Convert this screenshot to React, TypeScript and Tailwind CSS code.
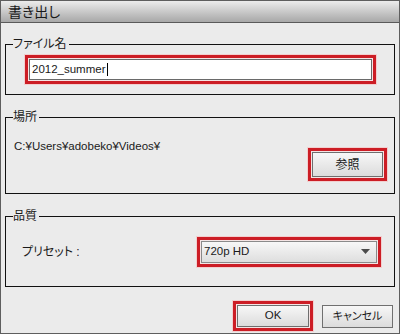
import React from "react";

const jp = "font-['Liberation_Sans','Noto_Sans_CJK_JP',sans-serif] [font-feature-settings:'palt']";

function RedBox({ children, className = "" }: { children: React.ReactNode; className?: string }) {
  return (
    <div className={`border-[3px] border-[#cc1d25] p-[1px] bg-[#f4e4e4] shadow-[0_0_0_1px_#f2cfcf] ${className}`}>
      {children}
    </div>
  );
}

function Group({ label, className, children }: { label: string; className: string; children?: React.ReactNode }) {
  return (
    <div className={`relative border border-[#111] ${className}`}>
      <span className="absolute left-[7px] top-[-8px] bg-[#ebebeb] pr-[2px] text-[12px] leading-[14px] text-[#1a1a1a]">
        {label}
      </span>
      {children}
    </div>
  );
}

export default function App() {
  return (
    <div className={`w-[400px] h-[334px] bg-[#ebebeb] border border-[#5e5e5e] flex flex-col text-[#1a1a1a] ${jp}`}>
      <div className="h-[22px] shrink-0 border-b border-[#5a5a5a] bg-gradient-to-b from-[#ececec] to-[#a8a8a8] pl-[7px] flex items-center text-[14px] leading-none">
        書き出し
      </div>
      <div className="flex-1 flex flex-col px-[4px]">
        <Group label="ファイル名" className="mt-[21px] h-[51px] pt-[10px] pl-[19px] pr-[18px]">
          <RedBox>
            <div className="h-[21px] border border-[#6a6a6a] bg-white pl-[2px] flex items-center text-[11.5px] leading-none">
              <span>2012_summer</span>
              <span className="ml-[1px] inline-block w-[1px] h-[13px] bg-black" />
            </div>
          </RedBox>
        </Group>

        <Group label="場所" className="mt-[22px] h-[77px] pl-[8px] pr-[7px] flex justify-between">
          <div className="self-start mt-[21px] text-[11.5px] leading-[14px]">C:¥Users¥adobeko¥Videos¥</div>
          <RedBox className="self-end mb-[12px]">
            <div className="w-[71px] h-[25px] border border-[#6e6e6e] bg-gradient-to-b from-[#f7f7f7] to-[#dcdcdc] flex items-center justify-center text-[12px] leading-none">
              参照
            </div>
          </RedBox>
        </Group>

        <Group label="品質" className="mt-[22px] h-[71px] pl-[16px] pr-[13px] flex items-center justify-between">
          <div className="text-[12px] leading-none mt-[1px]">プリセット :</div>
          <RedBox>
            <div className="w-[176px] h-[22px] border border-[#8a8a8a] bg-gradient-to-b from-[#f7f7f7] to-[#dedede] flex items-center justify-between pl-[2px] pr-[6px] text-[11.5px] leading-none">
              <span>720p HD</span>
              <svg width="9" height="5" viewBox="0 0 9 5">
                <polygon points="0,0 9,0 4.5,5" fill="#4a4a4a" />
              </svg>
            </div>
          </RedBox>
        </Group>

        <div className="mt-[14px] flex items-center justify-end gap-[9px] pr-[2px]">
          <RedBox>
            <div className="w-[72px] h-[22px] border border-[#6e6e6e] bg-gradient-to-b from-[#f7f7f7] to-[#dcdcdc] flex items-center justify-center text-[11.5px] leading-none">
              OK
            </div>
          </RedBox>
          <div className="w-[71px] h-[23px] border border-[#707070] bg-gradient-to-b from-[#f7f7f7] to-[#dcdcdc] flex items-center justify-center text-[11px] leading-none">
            キャンセル
          </div>
        </div>
      </div>
    </div>
  );
}
